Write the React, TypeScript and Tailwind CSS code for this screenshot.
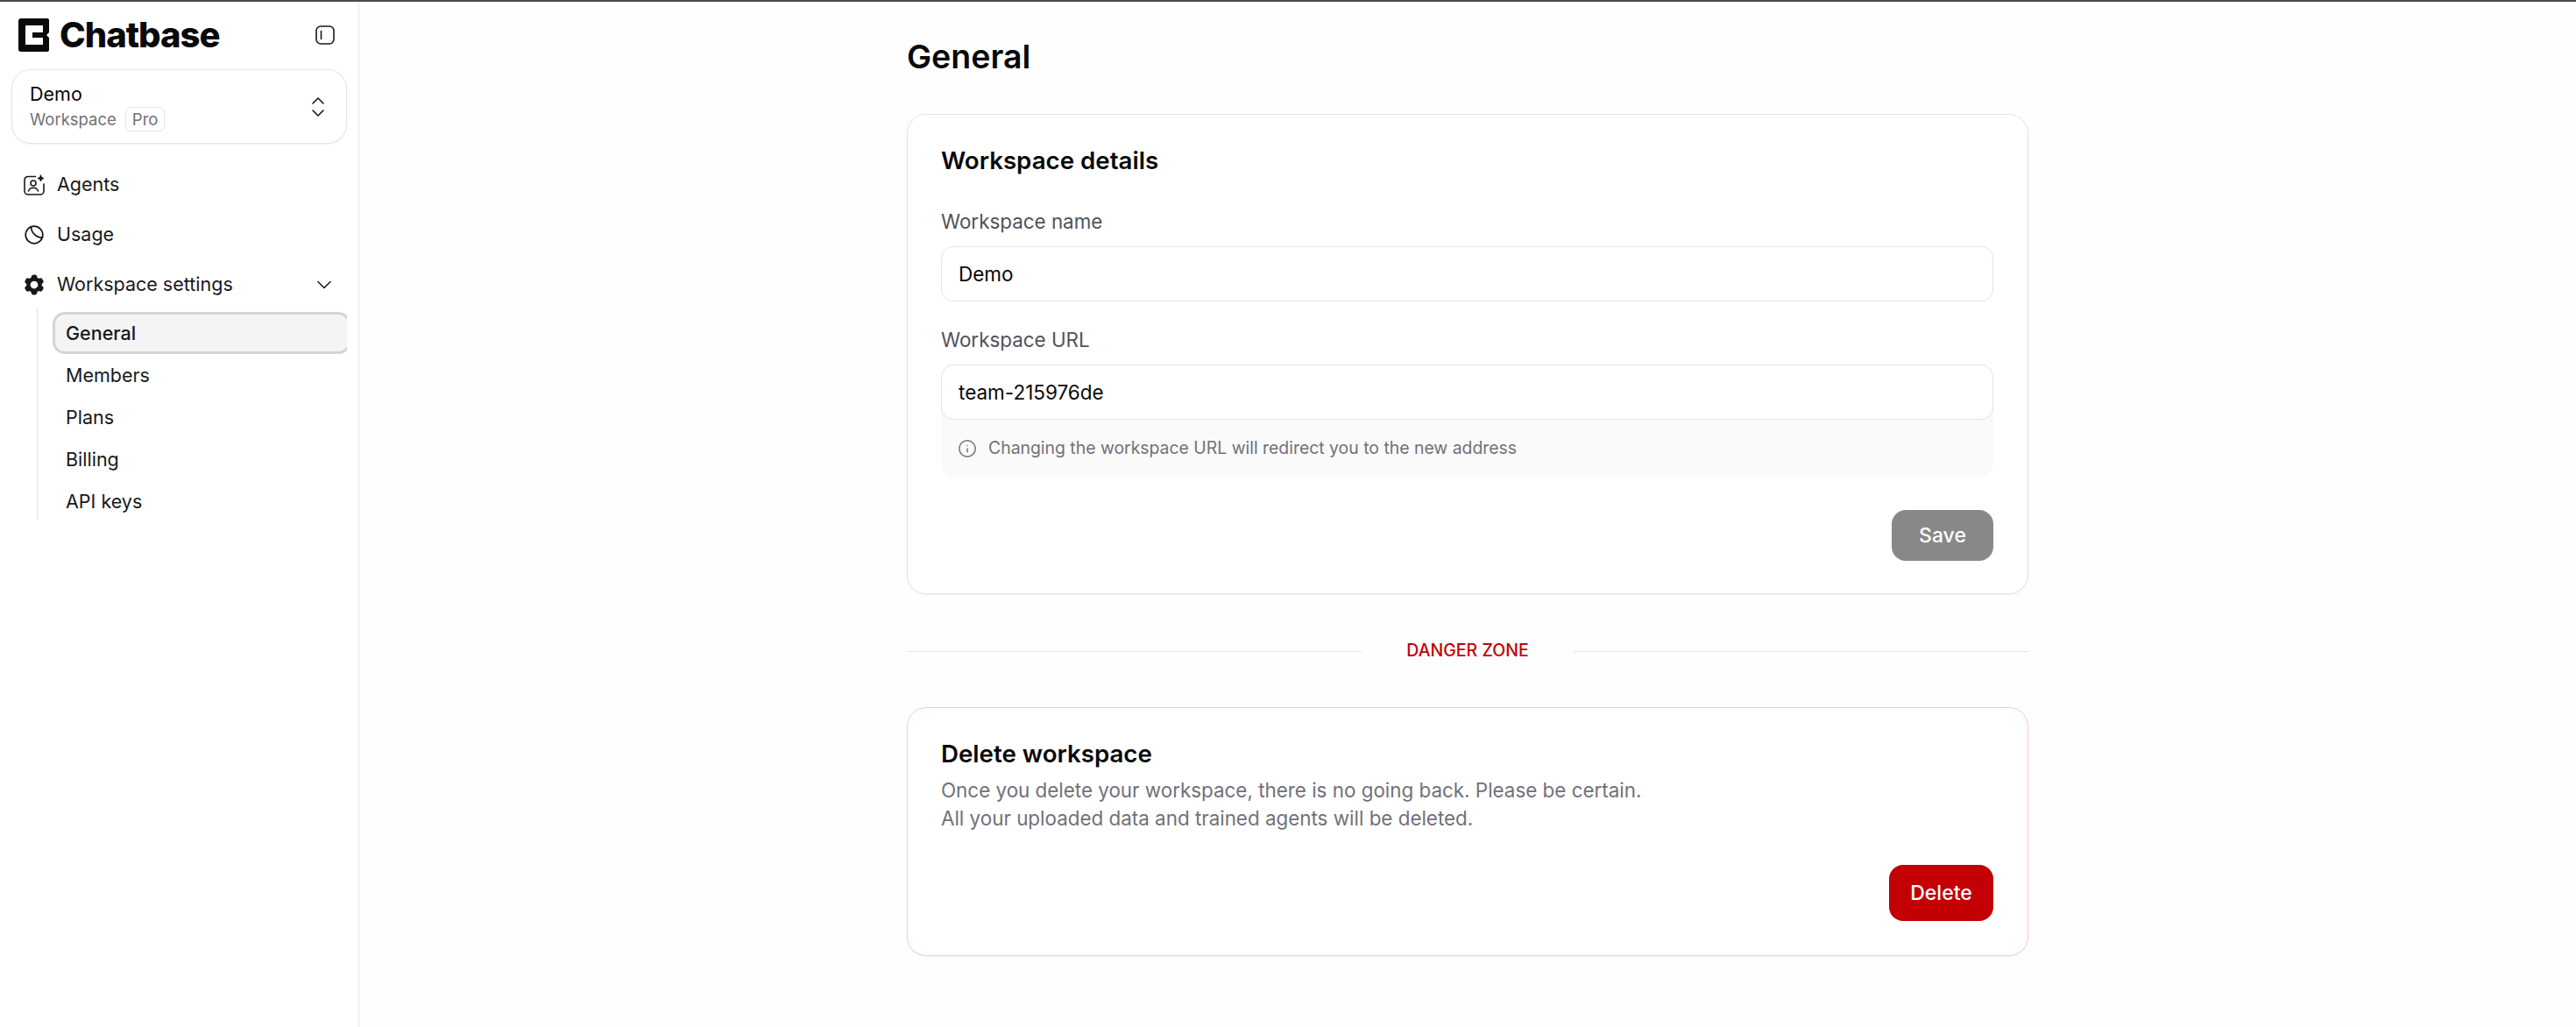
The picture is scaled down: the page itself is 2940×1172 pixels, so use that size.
import { ChevronDown, Info } from "lucide-react";
import { HiCog6Tooth } from "react-icons/hi2";

const SUB_ITEMS = ["General", "Members", "Plans", "Billing", "API keys"];

function Logo() {
  return (
    <svg width="36" height="38" viewBox="0 0 36 38">
      <path d="M3 0h30a2 2 0 0 1 2 2v14l-3 3 3 3v14a2 2 0 0 1-2 2H3a3 3 0 0 1-3-3V3a3 3 0 0 1 3-3z" fill="#0a0a0a" />
      <path d="M8 8h20v8H16v6h12v8H8z" fill="#fff" />
    </svg>
  );
}

function PanelIcon() {
  return (
    <svg width="22" height="22" viewBox="0 0 22 22" fill="none" stroke="#18181b" strokeWidth="1.6" strokeLinecap="round">
      <rect x="1" y="1" width="20" height="20" rx="5" />
      <line x1="6.5" y1="6.5" x2="6.5" y2="15.5" />
    </svg>
  );
}

function UpDownIcon() {
  return (
    <svg width="16" height="24" viewBox="0 0 16 24" fill="none" stroke="#18181b" strokeWidth="1.6" strokeLinecap="round" strokeLinejoin="round">
      <polyline points="2,8 8,2 14,8" />
      <polyline points="2,16 8,22 14,16" />
    </svg>
  );
}

function AgentsIcon() {
  return (
    <svg width="24" height="24" viewBox="0 0 24 24" fill="none" stroke="#18181b" strokeWidth="1.6" strokeLinecap="round" strokeLinejoin="round">
      <path d="M13.5 2.500H5a4 4 0 0 0-4 4v12.500a4 4 0 0 0 4 4h14a4 4 0 0 0 4-4v-8" />
      <circle cx="11" cy="10" r="3" />
      <path d="M5.500 19c1-2.600 3-3.800 5.500-3.800s4.500 1.200 5.500 3.800" />
      <path d="M19.500 1l1 2.500 2.500 1-2.500 1-1 2.500-1-2.500-2.500-1 2.500-1z" fill="#18181b" strokeWidth="1" />
    </svg>
  );
}

function UsageIcon() {
  return (
    <svg width="24" height="24" viewBox="0 0 24 24" fill="none" stroke="#18181b" strokeWidth="1.7" strokeLinecap="round" strokeLinejoin="round">
      <circle cx="12" cy="12" r="9.800" />
      <path d="M8.500 2.800C8.500 9 14 15.500 21.500 15" />
    </svg>
  );
}

export default function App() {
  return (
    <div className="flex h-[1172px] w-full flex-col overflow-hidden bg-[#fefefe] font-['Inter',sans-serif] text-[#09090b]">
      <div className="h-[2px] w-full shrink-0 bg-[#4a4a4a]" />
      <div className="flex min-h-0 flex-1">
        {/* Sidebar */}
        <aside className="w-[410px] shrink-0 border-r border-[#e4e4e7] bg-white px-[13px]">
          <div className="mt-[19px] flex h-[38px] items-center pl-[8px] pr-[15px]">
            <Logo />
            <span className="ml-[11px] text-[40px] font-extrabold leading-none tracking-[-0.025em] text-[#0a0a0a]">Chatbase</span>
            <span className="ml-auto translate-x-px"><PanelIcon /></span>
          </div>
          <div className="mt-[20px] flex h-[85px] items-center justify-between rounded-[22px] border border-[#e4e4e7] bg-white pl-[20px] pr-[24px] shadow-[0_1px_2px_rgba(0,0,0,0.06)]">
            <div>
              <div className="text-[21.500px] font-normal leading-[28px]">Demo</div>
              <div className="mt-[1px] flex items-center gap-[10px] text-[18.500px] leading-[28px] text-[#71717a]">
                <span>Workspace</span>
                <span className="rounded-[6px] border border-[#e4e4e7] px-[7px] leading-[26px]">Pro</span>
              </div>
            </div>
            <UpDownIcon />
          </div>
          <nav className="mt-[18px] text-[21.500px] text-[#18181b]">
            <div className="flex h-[57px] items-center gap-[14px] pl-[14px]">
              <AgentsIcon />
              <span>Agents</span>
            </div>
            <div className="flex h-[57px] items-center gap-[14px] pl-[14px]">
              <UsageIcon />
              <span>Usage</span>
            </div>
            <div className="flex h-[57px] items-center gap-[12px] pl-[12px] pr-[12px]">
              <HiCog6Tooth className="h-[28px] w-[28px] text-[#18181b]" />
              <span>Workspace settings</span>
              <ChevronDown className="ml-auto h-[28px] w-[28px]" strokeWidth={1.3} />
            </div>
            <div className="-mt-[2px] ml-[29px] h-[242px] overflow-hidden border-l border-[#e4e4e7] pl-[17px] pt-[5px]">
              {SUB_ITEMS.map((item, i) => (
                <div
                  key={item}
                  className={
                    i === 0
                      ? "-mr-[4px] flex h-[48px] items-center rounded-[14px] border-[3px] border-[#d4d4d8] bg-[#f4f4f5] pl-[12px] font-medium"
                      : "flex h-[48px] items-center pl-[15px]"
                  }
                >
                  {item}
                </div>
              ))}
            </div>
          </nav>
        </aside>

        {/* Main */}
        <main className="min-w-0 flex-1">
          <div className="mx-auto w-[1280px]">
            <h1 className="mt-[39px] h-[48px] text-[37.500px] font-semibold leading-[48px]">General</h1>

            <section className="mt-[41px] rounded-[22px] border border-[#e4e4e7] bg-white pb-[37px] pl-[38px] pr-[39px] pt-[36px] shadow-[0_1px_3px_rgba(0,0,0,0.05)]">
              <h2 className="text-[27.700px] font-semibold leading-[32px]">Workspace details</h2>
              <label className="mt-[40px] block text-[22.400px] font-normal leading-[28px] text-[#52525b]">Workspace name</label>
              <input
                readOnly
                defaultValue="Demo"
                className="mt-[14px] block h-[63px] w-full rounded-[14px] border border-[#e4e4e7] bg-white px-[19px] text-[22.500px] font-normal text-[#09090b] outline-none"
              />
              <label className="mt-[30px] block text-[22.400px] font-normal leading-[28px] text-[#52525b]">Workspace URL</label>
              <div className="mt-[14px] rounded-[14px] bg-[#fafafa]">
                <input
                  readOnly
                  defaultValue="team-215976de"
                  className="block h-[63px] w-full rounded-[14px] border border-[#e4e4e7] bg-white px-[19px] text-[22.500px] font-normal text-[#09090b] outline-none"
                />
                <div className="flex h-[65px] items-center gap-[13px] pl-[19px] text-[19.400px] text-[#71717a]">
                  <Info className="h-[22px] w-[22px]" strokeWidth={1.6} />
                  <span>Changing the workspace URL will redirect you to the new address</span>
                </div>
              </div>
              <div className="mt-[38px] flex justify-end">
                <button className="h-[58px] w-[116px] rounded-[16px] bg-[#888888] text-[23px] font-medium text-white">Save</button>
              </div>
            </section>

            <div className="mt-[51px] flex h-[28px] items-center">
              <div className="h-px flex-1 bg-[#e4e4e7]" />
              <span className="px-[51px] text-[19.500px] font-medium text-[#c4000a]">DANGER ZONE</span>
              <div className="h-px flex-1 bg-[#e4e4e7]" />
            </div>

            <section className="mt-[50px] rounded-[22px] border border-[#fecaca] bg-white pb-[39px] pl-[38px] pr-[39px] pt-[36px] shadow-[0_1px_3px_rgba(0,0,0,0.05)]">
              <h2 className="text-[27.700px] font-semibold leading-[32px]">Delete workspace</h2>
              <p className="mt-[10px] text-[22.400px] leading-[32px] text-[#71717a]">
                Once you delete your workspace, there is no going back. Please be certain.
                <br />
                All your uploaded data and trained agents will be deleted.
              </p>
              <div className="mt-[37px] flex justify-end">
                <button className="h-[64px] w-[119px] rounded-[16px] bg-[#c20006] text-[23px] font-medium text-white">Delete</button>
              </div>
            </section>
          </div>
        </main>
      </div>
    </div>
  );
}
